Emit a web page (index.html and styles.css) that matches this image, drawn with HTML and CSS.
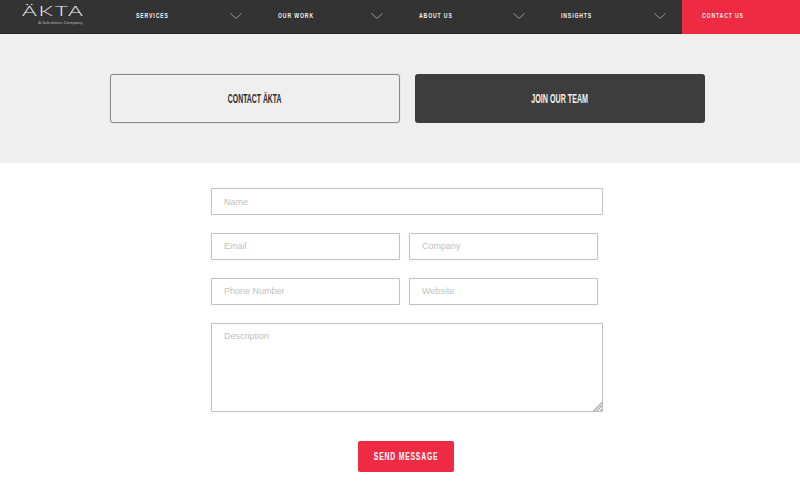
FILE: index.html
```html
<!DOCTYPE html>
<html lang="en">
<head>
<meta charset="utf-8">
<title>Contact ÄKTA</title>
<link rel="stylesheet" href="styles.css">
</head>
<body>
<header class="topbar">
  <a class="logo" href="#">
    <span class="logo-word">ÄKTA</span>
    <span class="logo-sub">A Salesforce Company</span>
  </a>
  <nav class="nav">
    <a class="nav-item" href="#"><span class="squeeze">SERVICES</span><svg class="chev" viewBox="0 0 12 6"><path d="M.4.4 6 5.4 11.6.4"/></svg></a>
    <a class="nav-item" href="#"><span class="squeeze">OUR WORK</span><svg class="chev" viewBox="0 0 12 6"><path d="M.4.4 6 5.4 11.6.4"/></svg></a>
    <a class="nav-item" href="#"><span class="squeeze">ABOUT US</span><svg class="chev" viewBox="0 0 12 6"><path d="M.4.4 6 5.4 11.6.4"/></svg></a>
    <a class="nav-item" href="#"><span class="squeeze">INSIGHTS</span><svg class="chev" viewBox="0 0 12 6"><path d="M.4.4 6 5.4 11.6.4"/></svg></a>
  </nav>
  <a class="nav-contact" href="#"><span class="squeeze">CONTACT US</span></a>
</header>
<section class="hero">
  <a class="tab tab-light" href="#"><span class="tab-label">CONTACT ÄKTA</span></a>
  <a class="tab tab-dark" href="#"><span class="tab-label tab-label-wide">JOIN OUR TEAM</span></a>
</section>
<form class="form">
  <input class="field field-full" type="text" placeholder="Name">
  <div class="row">
    <input class="field field-half" type="text" placeholder="Email">
    <input class="field field-half" type="text" placeholder="Company">
  </div>
  <div class="row">
    <input class="field field-half" type="text" placeholder="Phone Number">
    <input class="field field-half" type="text" placeholder="Website">
  </div>
  <textarea class="field field-area" placeholder="Description"></textarea>
  <button class="send" type="button"><span class="send-label">SEND MESSAGE</span></button>
</form>
</body>
</html>
```
FILE: styles.css
```css
* { box-sizing: border-box; }
html, body { margin: 0; padding: 0; }
body { width: 800px; height: 488px; overflow: hidden; background: #fff; font-family: "Liberation Sans", Arial, sans-serif; }
a { text-decoration: none; color: inherit; }

.topbar { display: flex; height: 34px; background: #333; border-bottom: 1px solid #262626; }
.logo { width: 116px; flex: none; padding: 4px 0 0 22px; display: flex; flex-direction: column; color: #f4f4f4; }
.logo-word { font-family: Lato, sans-serif; font-weight: 300; font-size: 13px; line-height: 15px; letter-spacing: 1px; white-space: nowrap; transform: scaleX(1.74); transform-origin: left center; }
.logo-sub { font-family: Lato, sans-serif; font-size: 4.6px; line-height: 6px; margin: 0 0 0 16px; color: #b5b5b5; white-space: nowrap; }
.nav { display: flex; flex: none; width: 566px; }
.nav-item { width: 141.5px; display: flex; align-items: center; justify-content: space-between; padding: 0 16px 2px 20px; color: #f2f2f2; font-weight: 700; font-size: 7.5px; letter-spacing: 1.3px; }
.squeeze { display: inline-block; white-space: nowrap; transform: scaleX(.68); transform-origin: left center; }
.chev { width: 12px; height: 6px; fill: none; stroke: #979797; stroke-width: 1; }
.nav-contact { flex: 1; height: 34px; background: #ef2b44; color: #fdeaec; display: flex; align-items: center; padding: 0 0 3px 20px; font-weight: 700; font-size: 7.5px; letter-spacing: 1.3px; }

.hero { height: 129px; background: #efefef; padding: 40px 95px 0 110px; display: flex; gap: 15px; }
.tab { width: 290px; height: 49px; border-radius: 3px; display: flex; align-items: center; justify-content: center; font-weight: 700; font-size: 13px; }
.tab-label { display: inline-block; white-space: nowrap; transform: scaleX(.53); }
.tab-label-wide { transform: scaleX(.55); }
.tab-light { border: 1px solid #8a8a8a; box-shadow: 0 0 1px #8a8a8a; color: #2b2b2b; }
.tab-dark { background: #3d3d3d; color: #f2f2f2; }

.form { padding: 25px 0 0 211px; display: flex; flex-direction: column; align-items: flex-start; }
.row { display: flex; gap: 9px; margin-top: 18px; }
.field { display: block; border: 1px solid #c2c2c2; box-shadow: 0 0 1px #cfcfcf; border-radius: 1px; background: #fff; padding: 0 12px 2px; font-family: "Liberation Sans", Arial, sans-serif; font-size: 9px; color: #333; outline: none; margin: 0; }
.field::placeholder { color: #bfbfbf; opacity: 1; }
.field-full { width: 392px; height: 27px; padding-bottom: 0; }
.field-half { width: 189px; height: 27px; }
.field-area { width: 392px; height: 89px; margin-top: 18px; padding: 7px 12px; resize: vertical; }
.field-area::-webkit-resizer { background: linear-gradient(135deg, transparent 68%, #b5b5b5 68% 74%, #f2f2f2 74% 79%, #b5b5b5 79% 85%, #f2f2f2 85% 90%, #b5b5b5 90%); }
.send { margin: 29px 0 0 147px; width: 96px; height: 31px; background: #ef2b44; border: 0; border-radius: 2px; color: #fff; font-family: "Liberation Sans", Arial, sans-serif; font-weight: 700; font-size: 11px; padding: 0 0 2px; display: flex; align-items: center; justify-content: center; }
.send-label { display: inline-block; flex: none; white-space: nowrap; letter-spacing: 1.3px; transform: scaleX(.62); }
```
